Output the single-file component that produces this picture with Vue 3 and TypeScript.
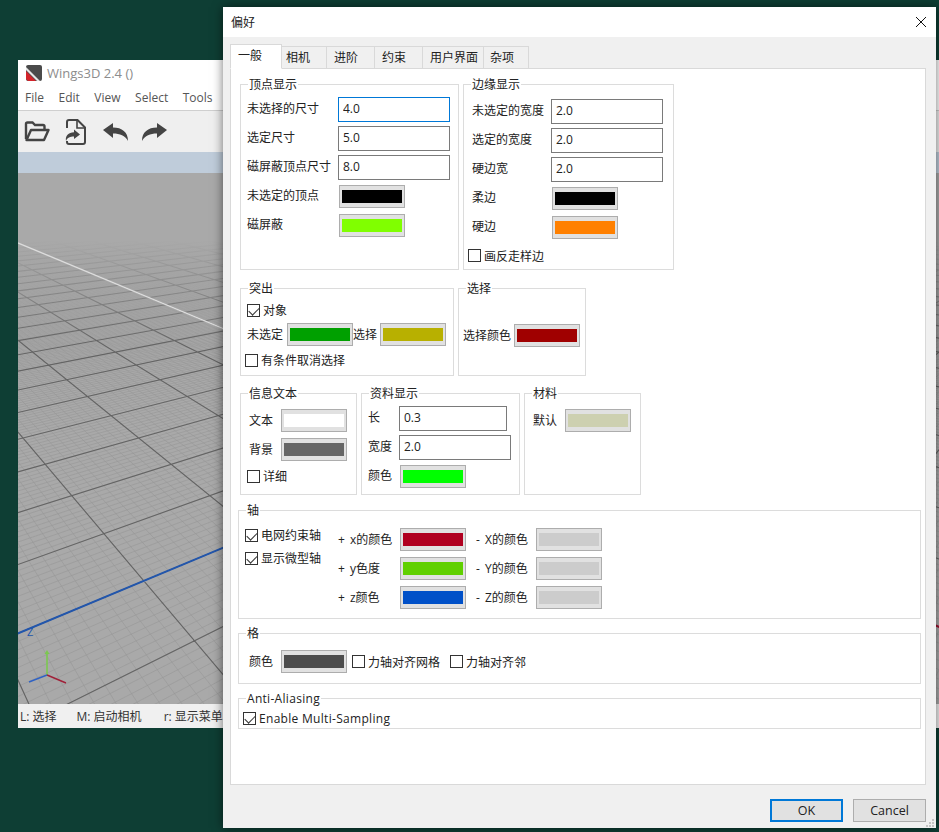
<script setup lang="ts">
type Field = { label: string; value?: string; color?: string }

const tabs = [
  { label: '一般', width: 52, pad: 7, active: true },
  { label: '相机', width: 45, pad: 4 },
  { label: '进阶', width: 48, pad: 7 },
  { label: '约束', width: 48, pad: 7 },
  { label: '用户界面', width: 61, pad: 7 },
  { label: '杂项', width: 45, pad: 6 },
]

const vertexRows: Field[] = [
  { label: '未选择的尺寸', value: '4.0' },
  { label: '选定尺寸', value: '5.0' },
  { label: '磁屏蔽顶点尺寸', value: '8.0' },
  { label: '未选定的顶点', color: '#000000' },
  { label: '磁屏蔽', color: '#80ff00' },
]

const edgeRows: Field[] = [
  { label: '未选定的宽度', value: '2.0' },
  { label: '选定的宽度', value: '2.0' },
  { label: '硬边宽', value: '2.0' },
  { label: '柔边', color: '#000000' },
  { label: '硬边', color: '#ff8000' },
]

const infoRows: Field[] = [
  { label: '文本', color: '#ffffff' },
  { label: '背景', color: '#666666' },
]

const axisRows: Field[] = [
  { label: '+ x的颜色', color: '#b00020' },
  { label: '- X的颜色', color: '#cccccc' },
  { label: '+ y色度', color: '#60d000' },
  { label: '- Y的颜色', color: '#cccccc' },
  { label: '+ z颜色', color: '#0050c8' },
  { label: '- Z的颜色', color: '#cccccc' },
]

// ground plane projection, fitted on the two vanishing points of the viewport
const project = (r: number, s: number) => {
  const w = 1 + r + s
  const x = (486 - 229 * r + 1200 * s) / w
  const y = (438 + 140 * r + 140 * s) / w
  return `${x.toFixed(1)} ${y.toFixed(1)}`
}

const segment = (r0: number, s0: number, r1: number, s1: number) =>
  `M${project(r0, s0)}L${project(r1, s1)}`

const gridPath = (step: number) => {
  let d = ''
  const first = -Math.floor(0.9 / step)
  const last = Math.floor(3 / step)
  for (let i = first; i <= last; i++) {
    const t = i * step
    d += segment(t, -0.97 - t, t, 5)
    d += segment(-0.97 - t, t, 5, t)
  }
  return d
}

const minorGrid = gridPath(0.0081)
const majorGrid = gridPath(0.081)
const whiteAxis = segment(0, 0, 5, 0)
const blueAxis = segment(0, 0, 0, -0.96)
const redAxis = segment(0, 0, -0.96, 0)
</script>

<template>
  <div class="desktop">
    <div class="wings">
      <div class="wings-title">
        <svg class="wings-logo" width="16" height="16" viewBox="0 0 16 16">
          <rect width="16" height="16" rx="2" fill="#4a4a4a" />
          <path d="M0 6 L10 16 H2 L0 14 Z" fill="#d3232a" />
          <path d="M0 2 L14 16 H11 L0 5 Z" fill="#e6e6e6" />
        </svg>
        <span>Wings3D 2.4 ()</span>
      </div>
      <div class="wings-menu">
        <span>File</span>
        <span>Edit</span>
        <span>View</span>
        <span>Select</span>
        <span>Tools</span>
      </div>
      <div class="wings-tools">
        <svg width="26" height="21" viewBox="0 0 26 21">
          <path d="M2 18 V3 a1.5 1.5 0 0 1 1.5-1.5 H8.5 L11 4 H19 a1.5 1.5 0 0 1 1.5 1.5 V8" fill="none" stroke="#444" stroke-width="2.4" />
          <path d="M2.5 19 L7 9 H24.5 L20 19 Z" fill="none" stroke="#444" stroke-width="2.4" stroke-linejoin="round" />
        </svg>
        <svg class="tool-file" width="22" height="26" viewBox="0 0 22 26">
          <path d="M3 9 V3 a2 2 0 0 1 2-2 H13.5 L21 8.5 V23 a2 2 0 0 1 -2 2 H5 a2 2 0 0 1 -2-2 V22" fill="none" stroke="#444" stroke-width="2" />
          <path d="M13 2 V9 H20" fill="none" stroke="#444" stroke-width="1.6" />
          <path d="M10 10.5 L16 15.5 L10 20 V17.5 C6 17.5 3.5 18.5 2 22 C1 16.5 4.5 13.5 10 13.2 Z" fill="#444" />
        </svg>
        <svg class="tool-undo" width="25" height="18" viewBox="0 0 25 18">
          <path d="M0 7 L10 0 V4.5 C19 4.5 25 9 25 18 C22 12.5 17 10.5 10 10.5 V15 Z" fill="#444" />
        </svg>
        <svg class="tool-redo" width="25" height="18" viewBox="0 0 25 18">
          <path d="M25 7 L15 0 V4.5 C6 4.5 0 9 0 18 C3 12.5 8 10.5 15 10.5 V15 Z" fill="#444" />
        </svg>
      </div>
      <div class="wings-band"></div>
      <svg class="wings-view" width="921" height="531" viewBox="18 173 921 531">
        <defs>
          <linearGradient id="fog" gradientUnits="userSpaceOnUse" x1="0" y1="240" x2="0" y2="345">
            <stop offset="0" stop-color="#a9a9a9" />
            <stop offset="1" stop-color="#a9a9a9" stop-opacity="0" />
          </linearGradient>
        </defs>
        <rect x="18" y="173" width="921" height="531" fill="#a9a9a9" />
        <path :d="minorGrid" fill="none" stroke="#979797" stroke-width="0.6" />
        <path :d="majorGrid" fill="none" stroke="#646464" stroke-width="1.1" />
        <rect x="18" y="173" width="921" height="68" fill="#a9a9a9" />
        <rect x="18" y="240" width="921" height="105" fill="url(#fog)" />
        <path :d="whiteAxis" fill="none" stroke="#dcdcdc" stroke-width="1.4" />
        <path :d="blueAxis" fill="none" stroke="#2256ac" stroke-width="2" />
        <path :d="redAxis" fill="none" stroke="#a01030" stroke-width="2" />
        <text x="27" y="636" class="axis-name">Z</text>
        <path d="M47 675 V652" stroke="#7cc850" stroke-width="1.6" fill="none" />
        <path d="M44.5 654 L47 650 L49.5 654 Z" fill="#7cc850" />
        <path d="M47 675 L66 683" stroke="#a02038" stroke-width="1.4" fill="none" />
        <path d="M47 675 L29 682" stroke="#2f62c4" stroke-width="1.4" fill="none" />
      </svg>
      <div class="wings-status">
        <span>L: 选择</span>
        <span>M: 启动相机</span>
        <span class="status-last">r: 显示菜单</span>
      </div>
    </div>

    <div class="dialog">
      <div class="dialog-title">
        <span>偏好</span>
        <svg width="10" height="10" viewBox="0 0 10 10">
          <path d="M0 0 L10 10 M10 0 L0 10" stroke="#111" stroke-width="1" fill="none" />
        </svg>
      </div>
      <div class="dialog-body">
        <div class="tabs">
          <div
            v-for="tab in tabs"
            :key="tab.label"
            class="tab"
            :class="{ active: tab.active }"
            :style="{ width: tab.width + 'px', paddingLeft: tab.pad + 'px' }"
          >{{ tab.label }}</div>
        </div>
        <div class="panel">
          <div class="row row-top">
            <div class="group vertex-group">
              <span class="legend">顶点显示</span>
              <div class="form">
                <template v-for="(row, i) in vertexRows" :key="row.label">
                  <span>{{ row.label }}</span>
                  <input v-if="row.value" :class="{ focused: i === 0 }" :value="row.value" readonly />
                  <button v-else class="color"><i :style="{ background: row.color }"></i></button>
                </template>
              </div>
            </div>
            <div class="group edge-group">
              <span class="legend">边缘显示</span>
              <div class="form">
                <template v-for="row in edgeRows" :key="row.label">
                  <span>{{ row.label }}</span>
                  <input v-if="row.value" :value="row.value" readonly />
                  <button v-else class="color"><i :style="{ background: row.color }"></i></button>
                </template>
                <label class="check span-two"><input type="checkbox" />画反走样边</label>
              </div>
            </div>
          </div>

          <div class="row row-mid">
            <div class="group hilite-group">
              <span class="legend">突出</span>
              <label class="check first"><input type="checkbox" checked />对象</label>
              <div class="inline">
                <span>未选定</span>
                <button class="color"><i style="background: #00a000"></i></button>
                <span>选择</span>
                <button class="color"><i style="background: #b8b000"></i></button>
              </div>
              <label class="check last"><input type="checkbox" />有条件取消选择</label>
            </div>
            <div class="group select-group">
              <span class="legend">选择</span>
              <div class="inline">
                <span>选择颜色</span>
                <button class="color"><i style="background: #a00000"></i></button>
              </div>
            </div>
          </div>

          <div class="row row-info">
            <div class="group info-group">
              <span class="legend">信息文本</span>
              <div class="pairs">
                <template v-for="row in infoRows" :key="row.label">
                  <span>{{ row.label }}</span>
                  <button class="color"><i :style="{ background: row.color }"></i></button>
                </template>
              </div>
              <label class="check"><input type="checkbox" />详细</label>
            </div>
            <div class="group data-group">
              <span class="legend">资料显示</span>
              <div class="data-form">
                <span>长</span>
                <input class="short" value="0.3" readonly />
                <span>宽度</span>
                <input value="2.0" readonly />
                <span>颜色</span>
                <button class="color"><i style="background: #00ff00"></i></button>
              </div>
            </div>
            <div class="group info-group">
              <span class="legend">材料</span>
              <div class="pairs">
                <span>默认</span>
                <button class="color"><i style="background: #cdd0b0"></i></button>
              </div>
            </div>
          </div>

          <div class="group axis-group">
            <span class="legend">轴</span>
            <div class="axis-checks">
              <label class="check"><input type="checkbox" checked />电网约束轴</label>
              <label class="check"><input type="checkbox" checked />显示微型轴</label>
            </div>
            <div class="axis-grid">
              <template v-for="row in axisRows" :key="row.label">
                <span>{{ row.label }}</span>
                <button class="color"><i :style="{ background: row.color }"></i></button>
              </template>
            </div>
          </div>

          <div class="group grid-group">
            <span class="legend">格</span>
            <span class="grid-label">颜色</span>
            <button class="color"><i style="background: #4d4d4d"></i></button>
            <label class="check grid-check"><input type="checkbox" />力轴对齐网格</label>
            <label class="check grid-check"><input type="checkbox" />力轴对齐邻</label>
          </div>

          <div class="group aa-group">
            <span class="legend">Anti-Aliasing</span>
            <label class="check"><input type="checkbox" checked />Enable Multi-Sampling</label>
          </div>
        </div>
        <div class="footer">
          <button class="action default">OK</button>
          <button class="action">Cancel</button>
        </div>
      </div>
      <svg class="grip" width="10" height="10" viewBox="0 0 10 10">
        <path d="M7 1h2v2h-2zM4 4h2v2h-2zM7 4h2v2h-2zM1 7h2v2h-2zM4 7h2v2h-2zM7 7h2v2h-2z" fill="#c4c4c4" />
      </svg>
    </div>
  </div>
</template>

<style scoped>
* {
  box-sizing: border-box;
}

.desktop {
  position: relative;
  width: 939px;
  height: 832px;
  overflow: hidden;
  background: #0e3e34;
  font-family: "Open Sans", "Noto Sans CJK SC", sans-serif;
  font-size: 12px;
  color: #222;
}

/* Wings window behind the dialog */
.wings {
  position: absolute;
  left: 18px;
  top: 60px;
  width: 921px;
  height: 668px;
  background: #f0f0f0;
  display: flex;
  flex-direction: column;
}

.wings-title {
  height: 25px;
  background: #fff;
  display: flex;
  align-items: center;
  gap: 5px;
  padding-left: 8px;
  font-size: 13px;
  color: #8c8c8c;
}

.wings-menu {
  height: 26px;
  background: #fff;
  border-bottom: 1px solid #cfcfcf;
  display: flex;
  align-items: center;
  gap: 14.5px;
  padding-left: 7px;
  font-size: 12px;
  color: #555;
}

.wings-tools {
  height: 41px;
  display: flex;
  align-items: center;
  padding-left: 6px;
  background: #efefef;
}

.tool-file {
  margin-left: 14px;
}

.tool-undo {
  margin-left: 17px;
}

.tool-redo {
  margin-left: 14px;
}

.wings-band {
  height: 21px;
  background: #bfccda;
}

.wings-view {
  display: block;
  flex: none;
}

.axis-name {
  font-size: 11px;
  fill: #2256ac;
  font-family: "Open Sans", sans-serif;
}

.wings-status {
  flex: 1;
  display: flex;
  align-items: center;
  gap: 20px;
  padding-left: 2px;
  color: #333;
}

.status-last {
  margin-left: 2px;
}

/* Preferences dialog */
.dialog {
  position: absolute;
  left: 223px;
  top: 7px;
  width: 713px;
  height: 821px;
  background: #f0f0f0;
  box-shadow: 0 0 10px rgba(0, 0, 0, 0.55);
  display: flex;
  flex-direction: column;
}

.dialog-title {
  height: 30px;
  flex: none;
  background: #fff;
  display: flex;
  align-items: center;
  justify-content: space-between;
  padding: 0 10px 0 8px;
}

.dialog-body {
  padding: 7px 10px 0 7px;
}

.tabs {
  display: flex;
  align-items: flex-end;
  height: 25px;
  margin-bottom: -1px;
  position: relative;
  z-index: 1;
}

.tab {
  height: 23px;
  line-height: 22px;
  background: #f0f0f0;
  border: 1px solid #d9d9d9;
  border-left-width: 0;
}

.tab.active {
  height: 25px;
  background: #fff;
  border-left-width: 1px;
  border-bottom-color: #fff;
}

.panel {
  height: 717px;
  background: #fff;
  border: 1px solid #d9d9d9;
  padding: 15px 4px 0 7px;
  display: flex;
  flex-direction: column;
}

.row {
  display: flex;
  gap: 4px;
  margin-left: 2px;
}

.row-top {
  height: 186px;
}

.row-mid {
  height: 88px;
  margin-top: 18px;
}

.row-info {
  height: 102px;
  margin-top: 17px;
}

.group {
  position: relative;
  border: 1px solid #dcdcdc;
  flex: none;
}

.legend {
  position: absolute;
  left: 7px;
  top: -8px;
  padding: 0 1px;
  line-height: 16px;
  background: #fff;
}

.form {
  display: grid;
  grid-auto-rows: 29px;
  align-items: center;
}

/* CJK labels sit a little high next to their controls */
.form span,
.data-form span {
  padding-bottom: 3px;
}

.pairs span,
.inline span,
.axis-grid span {
  padding-bottom: 2px;
}

input:not([type="checkbox"]) {
  height: 25px;
  width: 112px;
  border: 1px solid #7a7a7a;
  background: #fff;
  padding: 0 4px 2px;
  font: inherit;
  color: #222;
  outline: none;
  border-radius: 0;
}

input.focused {
  border-color: #0078d7 !important;
}

input.short {
  width: 108px;
}

.color {
  display: block;
  flex: none;
  width: 66px;
  height: 23px;
  padding: 4px 2px;
  border: 1px solid #adadad;
  background: #e1e1e1;
  border-radius: 0;
}

.color i {
  display: block;
  width: 60px;
  height: 13px;
}

.form .color {
  margin-left: 1px;
}

.check {
  display: flex;
  align-items: center;
  gap: 3px;
  height: 18px;
}

.check input {
  appearance: none;
  position: relative;
  flex: none;
  width: 13px;
  height: 13px;
  margin: 0;
  border: 1px solid #333;
  background: #fff;
}

.check input:checked::after {
  content: "";
  position: absolute;
  left: 3px;
  top: 0;
  width: 5px;
  height: 9px;
  border: solid #333;
  border-width: 0 1px 1px 0;
  transform: rotate(45deg);
}

.vertex-group {
  width: 219px;
  padding: 10px 0 0 6px;
}

.vertex-group .form {
  grid-template-columns: 91px 1fr;
}

.edge-group {
  width: 211px;
  padding: 12px 0 0 8px;
}

.edge-group .form {
  grid-template-columns: 79px 1fr;
}

.span-two {
  grid-column: span 2;
  margin-left: -4px;
  margin-top: -2px;
}

.inline {
  display: flex;
  align-items: center;
}

.hilite-group {
  width: 214px;
  padding: 12px 0 0 6px;
}

.hilite-group .inline {
  margin-top: 4px;
}

.hilite-group .inline .color:nth-child(2) {
  margin: 0 0 0 4px;
}

.hilite-group .inline .color:nth-child(4) {
  margin: 0 0 0 3px;
}

.hilite-group .check.last {
  margin: 5px 0 0 -2px;
}

.select-group {
  width: 128px;
  padding: 35px 0 0 4px;
}

.select-group .color {
  margin-left: 3px;
}

.info-group {
  width: 117px;
  padding: 15px 0 0 8px;
}

.pairs {
  display: grid;
  grid-template-columns: 32px 66px;
  row-gap: 6px;
  align-items: center;
}

.info-group .check {
  margin: 6px 0 0 -2px;
}

.data-group {
  width: 159px;
  padding: 10px 0 0 6px;
}

.data-form {
  display: grid;
  grid-template-columns: 31px 1fr;
  grid-auto-rows: 29px;
  align-items: center;
}

.data-form .color {
  margin-left: 1px;
}

.axis-group {
  height: 109px;
  margin-top: 15px;
  padding: 14px 0 0 6px;
  display: flex;
}

.axis-checks {
  width: 93px;
  padding-top: 1px;
  display: flex;
  flex-direction: column;
  gap: 5px;
}

.axis-grid {
  display: grid;
  grid-template-columns: 62px 76px 60px 66px;
  grid-auto-rows: 29px;
  align-items: center;
  word-spacing: 2px;
}

.grid-group {
  height: 51px;
  margin-top: 14px;
  padding: 6px 0 0 10px;
  display: flex;
  align-items: center;
}

.grid-label {
  width: 32px;
  padding-bottom: 2px;
}

.grid-check {
  width: 98px;
  margin-left: 5px;
}

.grid-check:last-child {
  margin-left: 0;
}

.aa-group {
  height: 31px;
  margin-top: 14px;
  padding: 10px 0 0 4px;
  letter-spacing: 0.3px;
}

.footer {
  display: flex;
  justify-content: flex-end;
  gap: 10px;
  margin-top: 14px;
}

.action {
  width: 73px;
  height: 23px;
  border: 1px solid #adadad;
  background: #e1e1e1;
  font: inherit;
  font-size: 12.5px;
  color: #222;
  border-radius: 0;
  padding: 0;
}

.action.default {
  border: 2px solid #0078d7;
}

.grip {
  position: absolute;
  right: 1px;
  bottom: 0;
}
</style>

<style>
html,
body {
  margin: 0;
  overflow: hidden;
}
</style>
